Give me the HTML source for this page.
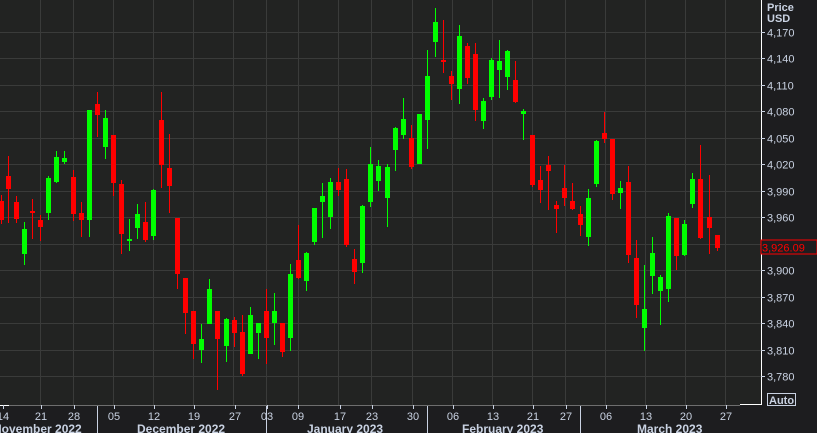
<!DOCTYPE html>
<html><head><meta charset="utf-8"><style>
html,body{margin:0;padding:0;background:#1d1d1f;}
body{width:817px;height:433px;overflow:hidden;position:relative;font-family:"Liberation Sans",sans-serif;}
svg{position:absolute;left:0;top:0;}
</style></head><body>
<svg id="s" width="817" height="433" xmlns="http://www.w3.org/2000/svg">
<rect x="0" y="0" width="761" height="405" fill="#222322"/>
<g id="grid" stroke="#3a3b3a" stroke-width="1"></g>
<g id="c"></g>
<line x1="0" y1="405.5" x2="740" y2="405.5" stroke="#6e6e6e"/>
<line x1="740" y1="404.5" x2="761" y2="404.5" stroke="#ffffff"/>
<line x1="761.5" y1="0" x2="761.5" y2="405" stroke="#ffffff"/>
<line x1="0" y1="405.5" x2="9" y2="405.5" stroke="#ffffff"/>
<g id="ax" font-size="11" fill="#c9d2e2"></g>
<text x="767" y="11" font-size="11" font-weight="bold" fill="#c9d2e2">Price</text>
<text x="767" y="22" font-size="11" font-weight="bold" fill="#c9d2e2">USD</text>
<rect x="761" y="240" width="56" height="14" fill="#1d1d1f" stroke="#ff0000" stroke-width="1"/>
<text x="762" y="251.5" font-size="11" fill="#ff0000">3,926.09</text>
<rect x="767.5" y="393.5" width="28" height="12" fill="none" stroke="#c9d2e2"/>
<text x="769" y="404" font-size="11" font-weight="bold" fill="#c9d2e2">Auto</text>
<g id="dt" font-size="11" fill="#c9d2e2"></g>
<g font-size="12" font-weight="bold" fill="#c9d2e2">
<text x="-7" y="433">November 2022</text>
<text x="137" y="433">December 2022</text>
<text x="307" y="433">January 2023</text>
<text x="462" y="433">February 2023</text>
<text x="637" y="433">March 2023</text>
</g>
<g stroke="#c9d2e2"><line x1="97.5" y1="406" x2="97.5" y2="433"/><line x1="266.5" y1="406" x2="266.5" y2="433"/><line x1="427.5" y1="406" x2="427.5" y2="433"/><line x1="580.5" y1="406" x2="580.5" y2="433"/></g>
</svg>
<script>
var NS="http://www.w3.org/2000/svg";
function el(p,t,a,tx){var e=document.createElementNS(NS,t);for(var k in a)e.setAttribute(k,a[k]);if(tx)e.textContent=tx;document.getElementById(p).appendChild(e);}
var vx=[40,73,113,153,193,233,266,298,338,371,412,452,492,532,565,605,645,685,725];
vx.forEach(function(x){el("grid","line",{x1:x+.5,y1:0,x2:x+.5,y2:405});});
var labs=["4,170","4,140","4,110","4,080","4,050","4,020","3,990","3,960","3,930","3,900","3,870","3,840","3,810","3,780"];
labs.forEach(function(l,i){var y=Math.round(32+i*26.46)+.5;el("grid","line",{x1:0,y1:y,x2:761,y2:y});
el("ax","line",{x1:761,y1:y,x2:765,y2:y,stroke:"#c9d2e2"});if(l!="3,930")el("ax","text",{x:767,y:y+4},l);});
var dts=[[3,"14"],[41,"21"],[74,"28"],[114,"05"],[154,"12"],[194,"19"],[235,"27"],[267,"03"],[298,"09"],[340,"17"],[372,"23"],[413,"30"],[453,"06"],[493,"13"],[533,"21"],[566,"27"],[606,"06"],[646,"13"],[686,"20"],[726,"27"]];
dts.forEach(function(d){el("dt","line",{x1:d[0]+.5,y1:405,x2:d[0]+.5,y2:409,stroke:"#c9d2e2"});el("dt","text",{x:d[0],y:420,"text-anchor":"middle"},d[1]);});
var C=[[1,195,201,220,224,'r'],[8,156,176,189,223,'r'],[16,196,202,219,223,'r'],[24,222,229,254,265,'g'],[32,199,211,213,239,'r'],[40,215,220,227,241,'r'],[48,176,178,213,220,'g'],[56,151,157,182,183,'g'],[64,151,158,162,164,'g'],[73,170,177,214,221,'r'],[81,202,213,220,237,'r'],[89,110,110,220,237,'g'],[97,92,104,115,137,'r'],[105,110,118,147,159,'g'],[113,135,135,183,196,'r'],[121,180,184,234,254,'r'],[129,219,239,241,251,'g'],[137,204,214,228,239,'g'],[145,202,222,240,242,'r'],[153,189,190,236,240,'g'],[161,92,120,165,188,'r'],[169,134,168,186,213,'r'],[177,218,218,274,289,'r'],[185,278,278,313,334,'r'],[193,311,311,344,359,'r'],[201,324,339,350,363,'g'],[209,279,289,324,324,'g'],[217,311,311,339,390,'r'],[226,318,319,346,362,'g'],[234,317,320,333,347,'r'],[242,315,332,374,376,'r'],[250,307,315,354,354,'g'],[258,323,323,333,359,'g'],[266,289,311,338,364,'r'],[274,293,311,323,345,'g'],[282,323,323,352,357,'r'],[290,264,274,338,351,'g'],[298,225,260,278,279,'r'],[306,252,253,281,291,'g'],[314,208,208,242,245,'g'],[322,183,196,202,238,'g'],[330,178,182,217,229,'g'],[338,168,182,190,196,'r'],[346,169,179,245,247,'r'],[354,249,259,272,284,'r'],[362,205,206,263,273,'g'],[370,147,164,202,207,'g'],[378,160,166,181,191,'g'],[387,164,167,198,227,'g'],[395,127,128,150,171,'g'],[403,98,119,135,139,'g'],[411,125,138,167,169,'r'],[419,114,114,164,164,'g'],[427,50,76,120,149,'g'],[435,8,22,42,57,'g'],[443,20,60,62,73,'r'],[451,71,76,84,100,'r'],[459,25,36,89,104,'g'],[467,43,46,78,84,'r'],[475,43,54,110,121,'r'],[483,98,101,121,129,'g'],[491,58,60,97,100,'g'],[499,40,61,70,98,'g'],[507,50,51,77,90,'g'],[515,61,80,102,103,'r'],[523,109,111,114,140,'g'],[532,135,135,185,187,'r'],[540,166,180,190,203,'r'],[548,156,165,171,210,'r'],[556,201,205,209,233,'r'],[564,165,188,198,206,'r'],[572,183,201,209,210,'r'],[580,206,214,225,236,'r'],[588,189,198,237,246,'g'],[596,140,141,184,187,'g'],[604,112,133,139,143,'r'],[612,139,139,194,200,'r'],[620,181,188,193,209,'g'],[628,166,182,255,263,'r'],[636,240,258,305,318,'r'],[644,265,309,328,351,'g'],[652,237,253,276,294,'g'],[660,275,277,291,325,'g'],[668,213,216,289,302,'g'],[676,218,218,256,270,'r'],[684,220,224,255,256,'g'],[692,173,179,204,208,'g'],[700,145,179,238,239,'r'],[709,175,217,228,254,'r'],[717,235,235,248,251,'r']];
C.forEach(function(c){var col=c[5]=='g'?'#00ff00':'#ff0000';
el("c","rect",{x:c[0],y:c[1],width:1,height:c[4]-c[1],fill:col});
el("c","rect",{x:c[0]-2,y:c[2],width:5,height:Math.max(2,c[3]-c[2]),fill:col});});
</script>
</body></html>
